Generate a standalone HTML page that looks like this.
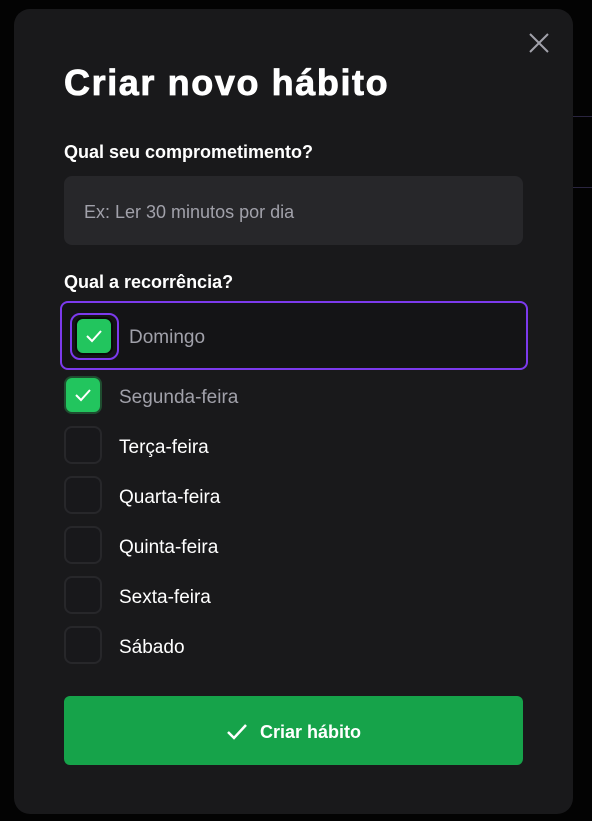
<!DOCTYPE html><html><head><style>
body{margin:0;width:592px;height:821px;background:#030303;font-family:"Liberation Sans",sans-serif;position:relative;overflow:hidden}
.m{position:absolute;left:14px;top:9px;width:559px;height:805px;background:#19191b;border-radius:16px}
.a{position:absolute}
.t{left:64px;top:62px;font-size:36px;font-weight:bold;color:#fff;letter-spacing:1.6px;-webkit-text-stroke:0.8px #fff}
.l{font-size:18px;font-weight:bold;color:#fff;left:64px}
.in{left:64px;top:176px;width:459px;height:69px;background:#27272a;border-radius:8px;color:#a1a1aa;font-size:18px;line-height:72px;box-sizing:border-box;padding-left:20px}
.cb{width:38px;height:38px;border-radius:8px;border:2px solid #27272a;box-sizing:border-box;background:#18181b}
.g{background:#22c55e;border-color:#1f4d30}
.tx{font-size:19px;color:#fff}
.btn{left:64px;top:696px;width:459px;height:69px;background:#16a34a;border-radius:6px;color:#fff;font-weight:bold;font-size:18px;display:flex;align-items:center;justify-content:center;gap:12px;padding-top:3px;box-sizing:border-box}
</style></head><body>
<div class="a" style="left:573px;top:116px;width:19px;height:1px;background:#2a2540"></div>
<div class="a" style="left:573px;top:187px;width:19px;height:1px;background:#2a2540"></div>
<div class="m"></div>
<svg class="a" style="left:529px;top:33px" width="20" height="20"><path d="M1 1L19 19M19 1L1 19" stroke="#a1a1aa" stroke-width="2"/></svg>
<div class="a t">Criar novo hábito</div>
<div class="a l" style="top:142px">Qual seu comprometimento?</div>
<div class="a in">Ex: Ler 30 minutos por dia</div>
<div class="a l" style="top:272px">Qual a recorrência?</div>
<div class="a" style="left:60px;top:301px;width:468px;height:69px;border:2px solid #7c3aed;border-radius:8px;box-sizing:border-box;background:#141416"></div>
<div class="a" style="left:70px;top:313px;width:49px;height:47px;border:2px solid #7c3aed;border-radius:10px;box-sizing:border-box"></div>
<div class="a cb g" style="left:75px;top:317px;border-color:#0a0a0a"><svg width="34" height="34"><path d="M10 17l5 5 9-10" fill="none" stroke="#fff" stroke-width="2"/></svg></div>
<div class="a tx" style="left:129px;top:327px;color:#a1a1aa">Domingo</div>
<div class="a cb g" style="left:64px;top:376px"><svg width="34" height="34"><path d="M10 17l5 5 9-10" fill="none" stroke="#fff" stroke-width="2"/></svg></div>
<div class="a tx" style="left:119px;top:387px;color:#a1a1aa">Segunda-feira</div>
<div class="a cb" style="left:64px;top:426px"></div><div class="a tx" style="left:119px;top:437px">Terça-feira</div>
<div class="a cb" style="left:64px;top:476px"></div><div class="a tx" style="left:119px;top:487px">Quarta-feira</div>
<div class="a cb" style="left:64px;top:526px"></div><div class="a tx" style="left:119px;top:537px">Quinta-feira</div>
<div class="a cb" style="left:64px;top:576px"></div><div class="a tx" style="left:119px;top:587px">Sexta-feira</div>
<div class="a cb" style="left:64px;top:626px"></div><div class="a tx" style="left:119px;top:637px">Sábado</div>
<div class="a btn"><svg width="22" height="22"><path d="M2 11l6 6L20 4" fill="none" stroke="#fff" stroke-width="2.5"/></svg>Criar hábito</div>
</body></html>
